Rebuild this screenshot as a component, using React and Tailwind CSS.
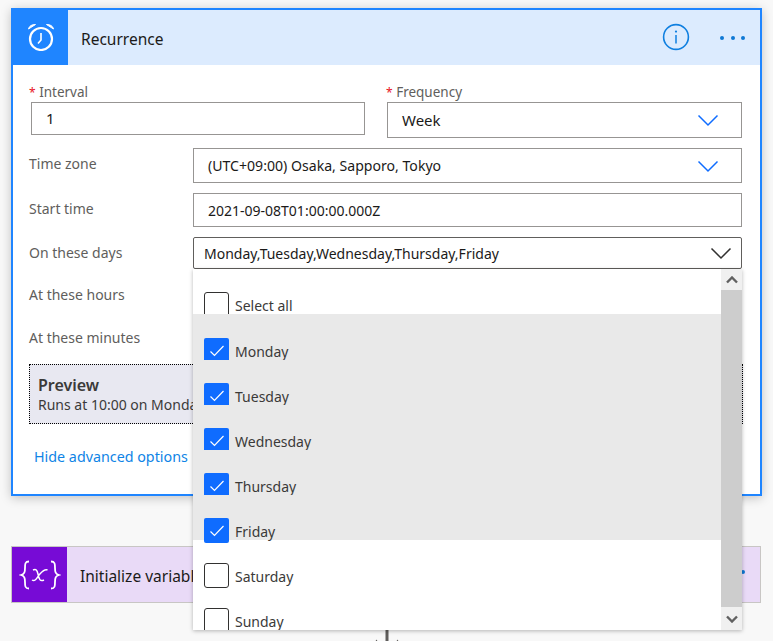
const Chevron = ({ color = "#0f6cff", className = "" }) => (
  <svg width="22" height="14" viewBox="0 0 22 14" fill="none" className={className}>
    <path d="M1.5 2.5 L11 12 L20.5 2.5" stroke={color} strokeWidth="1.5" />
  </svg>
);

const Check = () => (
  <svg width="16" height="12" viewBox="0 0 16 12" fill="none">
    <path d="M1.5 6.5 L5.5 10.5 L14.5 1" stroke="#fff" strokeWidth="1.2" />
  </svg>
);

const days = [
  { label: "Select all", checked: false, row: "h-[45px] pt-[23px]" },
  { label: "Monday", checked: true, row: "h-[46px] pt-[24px] bg-[#e9e9e9]" },
  { label: "Tuesday", checked: true, row: "h-[45px] pt-[23px] bg-[#e9e9e9]" },
  { label: "Wednesday", checked: true, row: "h-[45px] pt-[23px] bg-[#e9e9e9]" },
  { label: "Thursday", checked: true, row: "h-[45px] pt-[23px] bg-[#e9e9e9]" },
  { label: "Friday", checked: true, row: "h-[45px] pt-[23px] bg-[#e9e9e9]" },
  { label: "Saturday", checked: false, row: "h-[45px] pt-[23px]" },
  { label: "Sunday", checked: false, row: "h-[45px] pt-[23px]" },
];

const Label = ({ children, className = "" }) => (
  <div className={`w-[164px] shrink-0 text-[14px] leading-[20px] text-[#605e5c] ${className}`}>{children}</div>
);

const Dots = ({ className = "" }) => (
  <div className={`flex items-center gap-[6.5px] ${className}`}>
    <span className="h-[4px] w-[4px] rounded-full bg-[#0f78d4]" />
    <span className="h-[4px] w-[4px] rounded-full bg-[#0f78d4]" />
    <span className="h-[4px] w-[4px] rounded-full bg-[#0f78d4]" />
  </div>
);

export default function App() {
  return (
    <div
      className="relative h-[641px] w-[773px] overflow-hidden bg-[#f8f8f8] pl-[11px] pt-[8px] text-[#323130]"
      style={{ fontFamily: '"Noto Sans", "Open Sans", sans-serif' }}
    >
      <div className="h-[488px] w-[751px] border-2 border-[#1f85ff] bg-white shadow-[0_2px_10px_rgba(0,0,0,0.22)]">
        <div className="flex h-[55px] items-center bg-[#dcebfe]">
          <div className="flex h-full w-[55px] items-center justify-center bg-[#1f85ff]">
            <svg width="28" height="28" viewBox="0 0 28 28" fill="none" stroke="#fff" className="-mt-[1px]">
              <circle cx="14" cy="16" r="11" strokeWidth="2.2" />
              <path d="M14 10 V17 L11 20.5" strokeWidth="1.6" />
              <path d="M1.5 6 Q2.5 1.5 8.5 1.5 Z M26.5 6 Q25.5 1.5 19.5 1.5 Z" fill="#fff" strokeWidth="1" />
            </svg>
          </div>
          <div className="ml-[13px] mt-[4px] text-[15.5px] text-[#1b1a19]">Recurrence</div>
          <div className="ml-auto mr-[15px] flex items-center gap-[30px]">
            <svg width="28" height="28" viewBox="0 0 28 28" fill="none" className="-mt-[2px]">
              <circle cx="14" cy="14" r="12.4" stroke="#0f7fe0" strokeWidth="1.6" />
              <circle cx="14" cy="8.6" r="1.1" fill="#0f7fe0" />
              <path d="M14 12 V20.5" stroke="#0f7fe0" strokeWidth="1.5" />
            </svg>
            <Dots />
          </div>
        </div>

        <div className="pl-[16px] pr-[18px] pt-[16px]">
          <div className="flex">
            <div className="w-[357px]">
              <div className="h-[20px] pt-[1px] text-[13.5px] leading-[20px] text-[#605e5c]">
                <span className="text-[12px] text-[#e81123]">*</span> Interval
              </div>
              <div className="ml-[2px] mt-[1px] flex h-[33px] w-[334px] items-center border border-[#979593] pl-[14px] text-[15px] text-[#1b1a19]">
                1
              </div>
            </div>
            <div className="flex-1">
              <div className="h-[20px] pt-[1px] text-[13.5px] leading-[20px] text-[#605e5c]">
                <span className="text-[12px] text-[#e81123]">*</span> Frequency
              </div>
              <div className="ml-[1px] mt-[1px] flex h-[36px] items-center justify-between border border-[#979593] pl-[14px] pr-[22px] text-[15px] text-[#1b1a19]">
                Week
                <Chevron />
              </div>
            </div>
          </div>

          <div className="mt-[10px] flex items-start">
            <Label className="pt-[6px]">Time zone</Label>
            <div className="flex h-[35px] flex-1 items-center justify-between border border-[#979593] pl-[14px] pr-[22px] text-[14.1px] text-[#1b1a19]">
              (UTC+09:00) Osaka, Sapporo, Tokyo
              <Chevron />
            </div>
          </div>

          <div className="mt-[10px] flex items-start">
            <Label className="pt-[6px]">Start time</Label>
            <div className="flex h-[34px] flex-1 items-center border border-[#979593] pl-[14px] text-[14px] text-[#1b1a19]">
              2021-09-08T01:00:00.000Z
            </div>
          </div>

          <div className="mt-[10px] flex items-start">
            <Label className="pt-[6px] text-[13.8px]">On these days</Label>
            <div className="flex h-[32px] flex-1 items-center justify-between rounded-[2px] border border-[#605e5c] pl-[10px] pr-[9px] text-[14px] text-[#1b1a19]">
              Monday,Tuesday,Wednesday,Thursday,Friday
              <Chevron color="#323130" />
            </div>
          </div>

          <div className="mt-[16px]"><Label>At these hours</Label></div>
          <div className="mt-[23px]"><Label>At these minutes</Label></div>

          <div className="mt-[16px] h-[60px] w-[714px] border border-dotted border-black bg-[#e8e8f1] pl-[8px] pt-[9px] text-[#3b3a39]">
            <div className="text-[16px] font-semibold leading-[22px]">Preview</div>
            <div className="-mt-[1px] whitespace-nowrap text-[14px] leading-[20px]">Runs at 10:00 on Monday</div>
          </div>

          <div className="ml-[5px] mt-[23px] text-[14.3px] leading-[20px] text-[#0f84e6]">Hide advanced options</div>
        </div>
      </div>

      <div className="mt-[50px] flex h-[57px] w-[750px] items-center border border-[#c8c6c4] bg-[#e9daf7]">
        <div className="flex h-full w-[55px] items-center justify-center bg-[#770bd6] text-white">
          <svg width="42" height="30" viewBox="0 0 42 30" fill="none" stroke="#fff" strokeWidth="1.8">
            <path d="M10 1.5 C6 1.5 6 4 6 8 C6 12 5.5 14 2 15 C5.5 16 6 18 6 22 C6 26 6 28.5 10 28.5" />
            <path d="M32 1.5 C36 1.5 36 4 36 8 C36 12 36.5 14 40 15 C36.5 16 36 18 36 22 C36 26 36 28.5 32 28.5" />
            <path d="M14 10 C17 8.5 18 10 19 14 C20 19 21 22 25 20 M28.5 10 C25 8.5 22 13 20 15 C18 18 16 22 13 20" strokeWidth="1.5" />
          </svg>
        </div>
        <div className="ml-[13px] mt-[4px] text-[15.5px] text-[#1b1a19]">Initialize variable</div>
        <Dots className="ml-auto mr-[15px] pb-[5px]" />
      </div>

      <div className="flex justify-center pr-[11px] pt-[27px]">
        <svg width="24" height="12" viewBox="0 0 24 12" fill="none">
          <path d="M12 0 V12" stroke="#605e5c" strokeWidth="3" />
          <path d="M0 12 L1.5 9.5 L3 12 Z M21 12 L22.5 9.5 L24 12 Z" fill="#605e5c" />
        </svg>
      </div>

      <div className="absolute left-[193px] top-[269px] flex h-[361px] w-[549px] bg-white shadow-[0_1px_4px_rgba(0,0,0,0.28)]">
        <div className="min-w-0 flex-1 overflow-hidden">
          {days.map((d) => (
            <div key={d.label} className={`relative flex gap-[6px] pl-[11px] text-[14px] leading-[20px] text-[#3b3a39] ${d.row}`}>
              {d.checked ? (
                <div className="flex h-[25px] w-[25px] shrink-0 items-center justify-center rounded-[2px] bg-[#0f6cff]">
                  <Check />
                </div>
              ) : (
                <div className="h-[25px] w-[25px] shrink-0 rounded-[3px] border border-[#323130] bg-white" />
              )}
              <span className="pt-[4px]">{d.label}</span>
            </div>
          ))}
        </div>
        <div className="flex w-[21px] shrink-0 flex-col bg-[#cdcdcd]">
          <div className="flex h-[21px] items-center justify-center bg-[#f0f0f0]">
            <svg width="12" height="8" viewBox="0 0 12 8" fill="none"><path d="M1 6.5 L6 1.5 L11 6.5" stroke="#606060" strokeWidth="2.4" /></svg>
          </div>
          <div className="flex-1" />
          <div className="flex h-[23px] items-center justify-center bg-[#f0f0f0]">
            <svg width="12" height="8" viewBox="0 0 12 8" fill="none"><path d="M1 1.5 L6 6.5 L11 1.5" stroke="#606060" strokeWidth="2.4" /></svg>
          </div>
        </div>
      </div>
    </div>
  );
}
